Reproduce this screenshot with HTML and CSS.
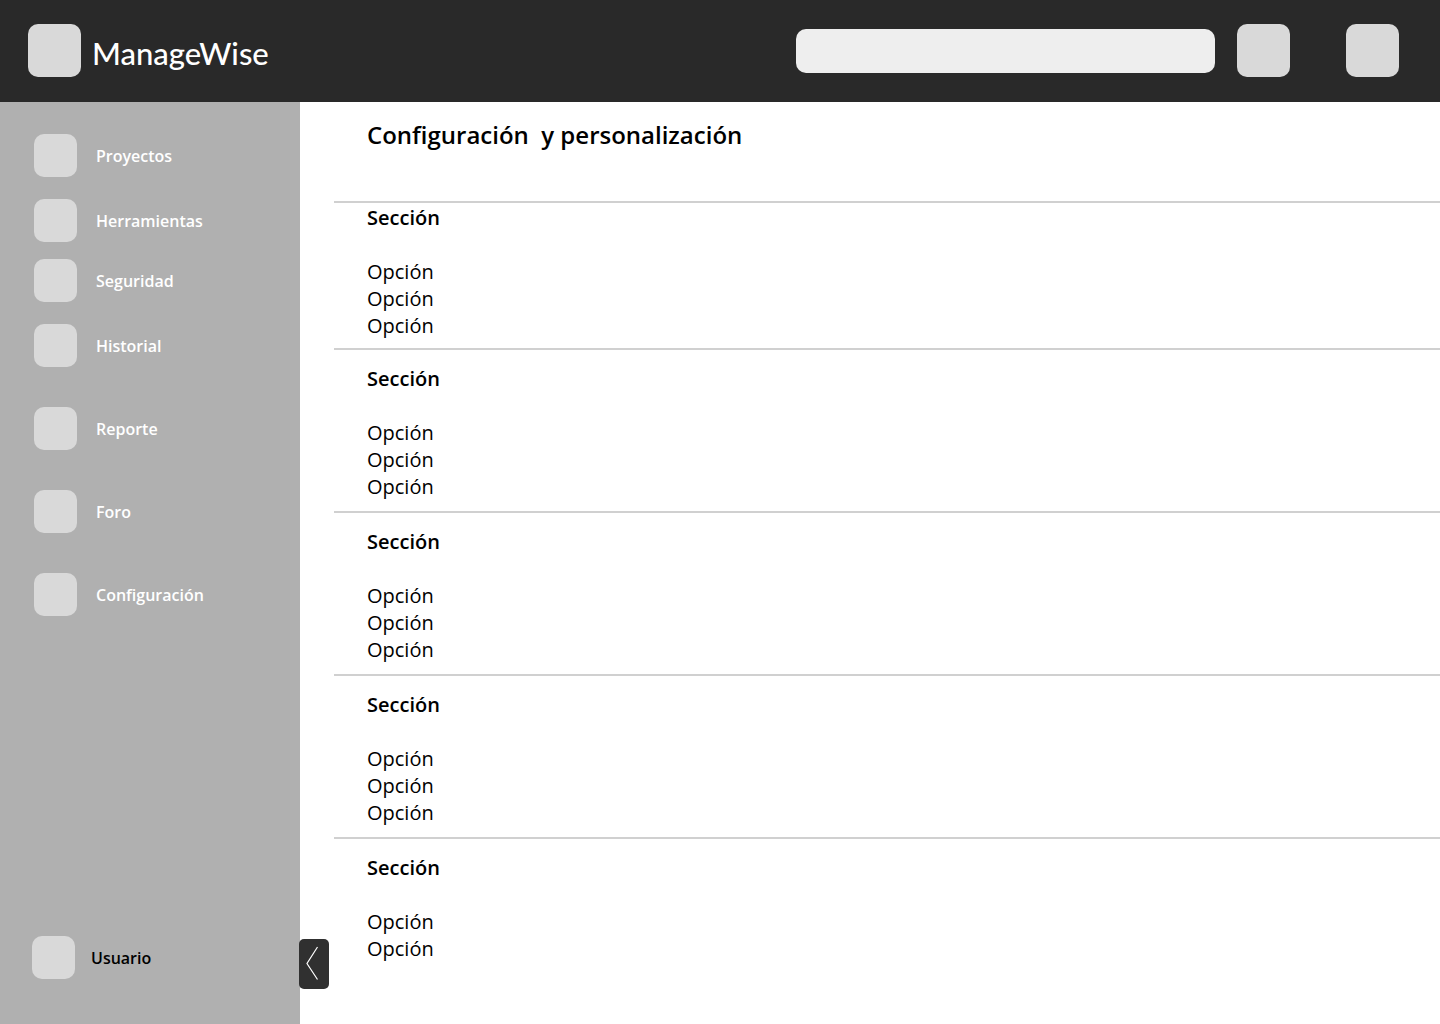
FILE: index.html
```html
<!DOCTYPE html>
<html lang="es">
<head>
<meta charset="utf-8">
<meta name="viewport" content="width=device-width, initial-scale=1">
<title>ManageWise</title>
<link rel="stylesheet" href="styles.css">
</head>
<body>
<header class="topbar">
  <a class="brand" href="#"><span class="brand-logo"></span><span class="brand-name">ManageWise</span></a>
  <input class="search" type="search" aria-label="Buscar">
  <div class="actions">
    <button class="action" type="button" aria-label="Notificaciones"></button>
    <button class="action" type="button" aria-label="Perfil"></button>
  </div>
</header>
<div class="shell">
  <aside class="sidebar">
    <nav class="nav">
      <a class="nav-link" href="#"><span class="nav-icon"></span>Proyectos</a>
      <a class="nav-link gap-medium" href="#"><span class="nav-icon"></span>Herramientas</a>
      <a class="nav-link gap-small" href="#"><span class="nav-icon"></span>Seguridad</a>
      <a class="nav-link gap-medium" href="#"><span class="nav-icon"></span>Historial</a>
      <a class="nav-link gap-large" href="#"><span class="nav-icon"></span>Reporte</a>
      <a class="nav-link gap-large" href="#"><span class="nav-icon"></span>Foro</a>
      <a class="nav-link gap-large" href="#"><span class="nav-icon"></span>Configuración</a>
    </nav>
    <a class="user" href="#"><span class="nav-icon"></span>Usuario</a>
    <button class="collapse" type="button" aria-label="Contraer menú">
      <svg width="30" height="50" viewBox="0 0 30 50" fill="none" stroke="#fff" stroke-width="1.2"><path d="M18.500 8 8 24.500 18.500 40.500"/></svg>
    </button>
  </aside>
  <main class="content">
    <h1 class="title">Configuración&nbsp; y personalización</h1>
    <section class="section">
      <h2 class="section-title">Sección</h2>
      <ul class="options"><li>Opción</li><li>Opción</li><li>Opción</li></ul>
    </section>
    <section class="section">
      <h2 class="section-title">Sección</h2>
      <ul class="options"><li>Opción</li><li>Opción</li><li>Opción</li></ul>
    </section>
    <section class="section">
      <h2 class="section-title">Sección</h2>
      <ul class="options"><li>Opción</li><li>Opción</li><li>Opción</li></ul>
    </section>
    <section class="section">
      <h2 class="section-title">Sección</h2>
      <ul class="options"><li>Opción</li><li>Opción</li><li>Opción</li></ul>
    </section>
    <section class="section">
      <h2 class="section-title">Sección</h2>
      <ul class="options"><li>Opción</li><li>Opción</li></ul>
    </section>
  </main>
</div>
</body>
</html>
```
FILE: styles.css
```css
* {
  box-sizing: border-box;
}

body {
  margin: 0;
  min-height: 100vh;
  display: flex;
  flex-direction: column;
  background: #fff;
  color: #000;
  font-family: "Open Sans", "Noto Sans", sans-serif;
}

a {
  color: inherit;
  text-decoration: none;
}

/* Top bar */
.topbar {
  display: flex;
  align-items: center;
  padding: 24px 41px 25px 28px;
  background: #292929;
}

.brand {
  display: flex;
  align-items: center;
  gap: 11px;
  margin-right: auto;
  color: #fff;
}

.brand-logo,
.action {
  flex: none;
  width: 53px;
  height: 53px;
  padding: 0;
  border: 0;
  border-radius: 10px;
  background: #d9d9d9;
}

.brand-name {
  padding-top: 4px;
  font: 500 31px/38px Lato, sans-serif;
}

.search {
  flex: 0 1 419px;
  min-width: 0;
  height: 44px;
  margin: 0 22px;
  padding: 0 16px;
  border: 0;
  border-radius: 10px;
  background: #eee;
  font: inherit;
}

.actions {
  display: flex;
  gap: 56px;
}

/* Sidebar */
.shell {
  flex: 1;
  display: flex;
}

.sidebar {
  position: relative;
  flex: none;
  width: 300px;
  display: flex;
  flex-direction: column;
  justify-content: space-between;
  padding: 32px 32px 45px;
  background: #b0b0b0;
  font-size: 16px;
  line-height: 22px;
  font-weight: 600;
}

.nav {
  display: flex;
  flex-direction: column;
  padding-left: 2px;
  color: #fff;
}

.nav-link {
  display: flex;
  align-items: center;
  gap: 19px;
}

.gap-small {
  margin-top: 17px;
}

.gap-medium {
  margin-top: 22px;
}

.gap-large {
  margin-top: 40px;
}

.nav-icon {
  width: 43px;
  height: 43px;
  border-radius: 10px;
  background: #d9d9d9;
}

.user {
  display: flex;
  align-items: center;
  gap: 16px;
}

.collapse {
  position: absolute;
  right: -29px;
  bottom: 35px;
  width: 30px;
  height: 50px;
  padding: 0;
  border: 0;
  border-radius: 5px;
  background: #303030;
}

.collapse svg {
  display: block;
}

/* Settings */
.content {
  flex: 1;
  min-width: 0;
  padding: 16px 0 32px 34px;
}

.title {
  margin: 0 0 50px;
  padding-left: 33px;
  font-size: 24px;
  line-height: 33px;
  font-weight: 600;
}

.section {
  padding: 15px 33px 11px;
  border-top: 2px solid #d0d0d0;
  font-size: 20px;
  line-height: 27px;
}

.title + .section {
  padding-top: 1px;
  padding-bottom: 9px;
}

.section-title {
  margin: 0 0 27px;
  font-size: 20px;
  font-weight: 600;
}

.options {
  margin: 0;
  padding: 0;
  list-style: none;
}
```
